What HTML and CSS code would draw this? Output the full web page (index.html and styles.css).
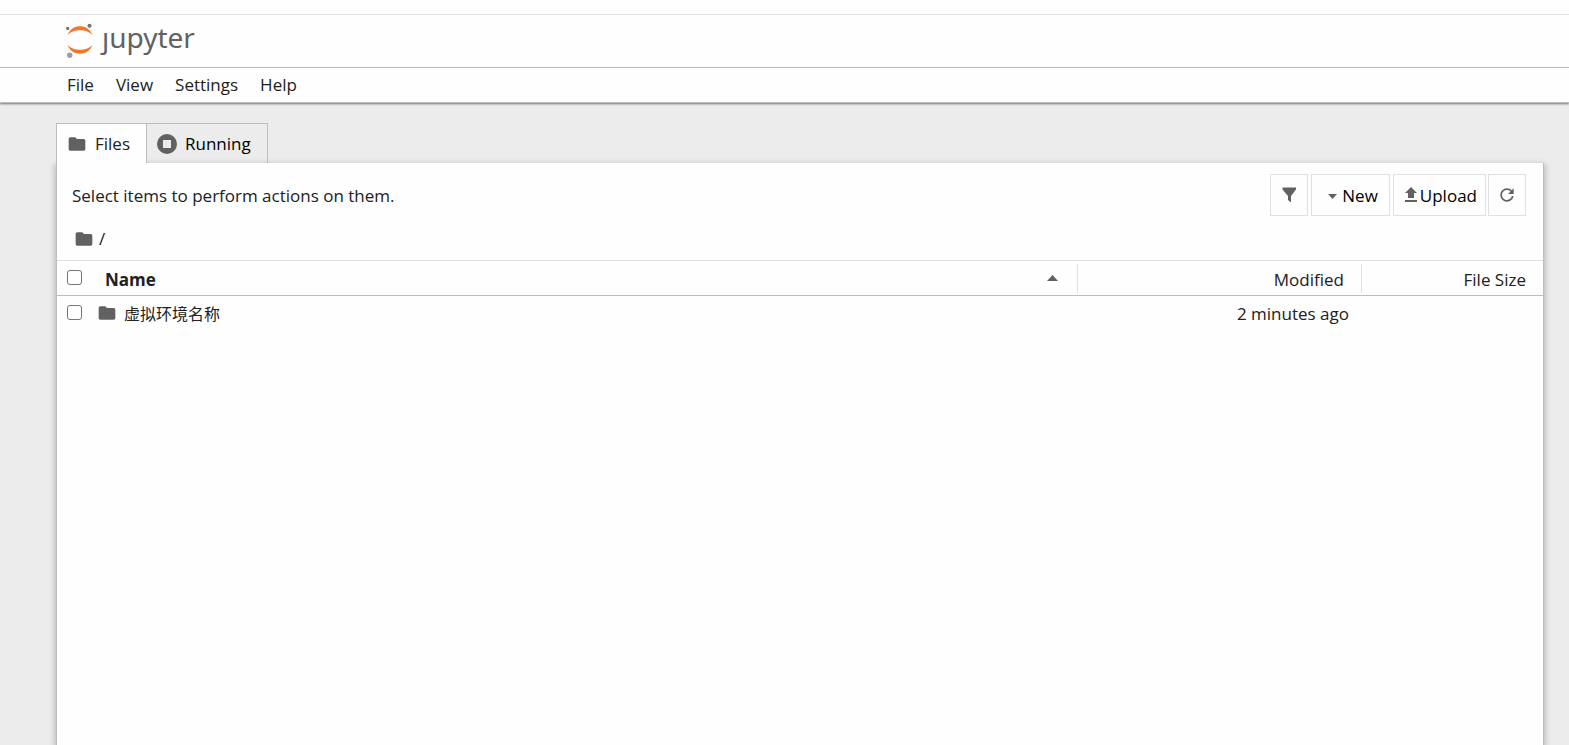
FILE: index.html
```html
<!DOCTYPE html>
<html lang="en">
<head>
<meta charset="utf-8">
<title>Home</title>
<link rel="stylesheet" href="styles.css">
</head>
<body>
<svg class="symbols" aria-hidden="true">
  <symbol id="folder" viewBox="0 0 24 24"><path d="M10 4H4c-1.1 0-1.99.9-1.99 2L2 18c0 1.100.9 2 2 2h16c1.100 0 2-.9 2-2V8c0-1.100-.9-2-2-2h-8l-2-2z"/></symbol>
</svg>
<header class="top">
  <a class="logo" href="#" aria-label="jupyter">
    <svg class="logo-mark" viewBox="0 0 30 36" aria-hidden="true">
      <path class="orange" d="M2.500 12C5 5.500 10 3.200 15 3.200S25 5.500 27.500 12C24 8.300 19.500 7.200 15 7.200S6 8.300 2.500 12zM2.500 22C5 28.500 10 30.700 15 30.700s10-2.200 12.500-8.700C24 25.700 19.500 26.700 15 26.700S6 25.700 2.500 22z"/>
      <circle cx="2.700" cy="5.500" r="1.700"/><circle cx="24.500" cy="2.800" r="2.100"/><circle class="light" cx="4.700" cy="32.300" r="2.700"/>
    </svg>
    <span class="logo-word">ȷupyter</span>
  </a>
</header>
<nav class="menu">
  <button>File</button><button>View</button><button>Settings</button><button>Help</button>
</nav>
<main class="main">
  <div class="tabs" role="tablist">
    <button class="tab active" role="tab" aria-selected="true"><svg class="icon"><use href="#folder"/></svg>Files</button>
    <button class="tab" role="tab" aria-selected="false"><svg class="icon stop" viewBox="0 0 20 20"><path fill-rule="evenodd" d="M10 0a10 10 0 1 0 0 20a10 10 0 1 0 0-20zM6 6h8v8h-8z"/></svg>Running</button>
  </div>
  <section class="panel">
    <div class="toolbar">
      <span class="hint">Select items to perform actions on them.</span>
      <button class="tool square" aria-label="Filter"><svg class="tool-icon" viewBox="0 0 16 16"><path d="M1.500 .5h13.500v2L10 9v6.500L7 13V9L1.500 2.500z"/></svg></button>
      <button class="tool new"><svg class="caret" viewBox="0 0 9 5"><path d="M0 0h9L4.500 5z"/></svg>New</button>
      <div class="pair">
        <button class="tool upload"><svg class="up" viewBox="0 0 14 16"><path d="M4 11V6H1L7 0l6 6h-3v5zM1 13h12v2H1z"/></svg>Upload</button>
        <button class="tool square refresh" aria-label="Refresh"><svg class="tool-icon" viewBox="0 0 18 18"><path d="M9 13.500c-2.490 0-4.500-2.010-4.500-4.500S6.510 4.500 9 4.500c1.240 0 2.360.52 3.170 1.330L10 8h5V3l-1.760 1.760C12.150 3.680 10.660 3 9 3 5.690 3 3.010 5.690 3.010 9S5.690 15 9 15c2.970 0 5.430-2.160 5.900-5h-1.520c-.46 2-2.240 3.500-4.380 3.500z"/></svg></button>
      </div>
    </div>
    <div class="crumbs"><a href="#" aria-label="Home"><svg class="icon"><use href="#folder"/></svg></a><span>/</span></div>
    <table class="files">
      <thead>
        <tr>
          <th class="c-name" scope="col"><div class="cell"><input type="checkbox" aria-label="Select all"><span class="head name-label">Name</span><svg class="sort" viewBox="0 0 11 6"><path d="M0 6h11L5.500 0z"/></svg></div></th>
          <th class="c-mod" scope="col"><div class="cell end"><span class="head">Modified</span></div></th>
          <th class="c-size" scope="col"><div class="cell end"><span class="head">File Size</span></div></th>
        </tr>
      </thead>
      <tbody>
        <tr>
          <td><div class="cell"><input type="checkbox" id="f1" aria-label="虚拟环境名称"><svg class="icon"><use href="#folder"/></svg><label class="file" for="f1">虚拟环境名称</label></div></td>
          <td class="when">2 minutes ago</td>
          <td></td>
        </tr>
      </tbody>
    </table>
  </section>
</main>
</body>
</html>
```
FILE: styles.css
```css
* { box-sizing: border-box; }
body {
  margin: 0;
  min-height: 100vh;
  display: flex;
  flex-direction: column;
  background: #ececec;
  color: #212121;
  font: 17px/24px "Open Sans", "Noto Sans CJK SC", sans-serif;
  overflow: hidden;
}
button { font: inherit; color: inherit; background: none; border: 0; padding: 0; }
svg { fill: #616161; flex: none; }
.symbols { position: absolute; width: 0; height: 0; }
.icon { width: 20px; height: 20px; display: block; }

.top {
  background: #fefefe;
  border-bottom: 1px solid #bdbdbd;
  padding-top: 14px;
}
.logo {
  display: flex;
  gap: 7px;
  height: 53px;
  padding: 8px 0 0 65px;
  border-top: 1px solid #e0e0e0;
  text-decoration: none;
}
.logo-mark { width: 30px; height: 36px; }
.logo-mark .orange { fill: #f37726; }
.logo-mark circle { fill: #767677; }
.logo-mark .light { fill: #9e9e9e; }
.logo-word { color: #616161; font: 28px/28px "Noto Sans", sans-serif; }

.menu {
  position: relative;
  display: flex;
  background: #fefefe;
  padding: 0 56px;
  height: 35px;
  border-bottom: 1px solid #bdbdbd;
  box-shadow: 0 1px 2px #757575;
}
.menu button { padding: 0 11px; }

.main {
  flex: 1;
  display: flex;
  flex-direction: column;
  padding: 20px 25px 0 56px;
}
.tabs { display: flex; position: relative; z-index: 1; }
.tab {
  display: flex;
  align-items: center;
  gap: 8px;
  height: 40px;
  padding: 1px 16px 0 10px;
  border: 1px solid #bdbdbd;
  border-width: 1px 1px 0 0;
  color: #000;
}
.tab.active { background: #fefefe; border-left-width: 1px; color: #212121; }

.panel {
  flex: 1;
  background: #fefefe;
  border: 1px solid #bdbdbd;
  border-width: 0 1px;
  box-shadow: 0 2px 6px 1px rgba(0, 0, 0, .24);
}
.toolbar { display: flex; align-items: center; gap: 3px; padding: 11px 17px 0 15px; }
.hint { flex: 1; padding-top: 2px; }
.pair { display: flex; gap: 2px; }
.tool {
  display: flex;
  align-items: center;
  justify-content: center;
  height: 42px;
  padding: 0 9px;
  border: 1px solid #e0e0e0;
  color: #000;
}
.square { width: 38px; padding: 0; }
.tool-icon { width: 16px; height: 16px; }
.refresh .tool-icon { width: 20px; height: 20px; }
.new { gap: 5px; padding: 2px 11px 0 16px; }
.caret { width: 9px; height: 5px; }
.upload { gap: 2px; padding: 2px 8px 0 10px; }
.up { width: 14px; height: 16px; margin-bottom: 2px; }
.crumbs { display: flex; align-items: center; gap: 5px; height: 44px; padding: 2px 17px 0; }

.files { width: 100%; border-collapse: collapse; table-layout: fixed; }
.files thead { border-top: 1px solid #e0e0e0; border-bottom: 1px solid #bdbdbd; }
.files th, .files td { padding: 0; height: 35px; font-weight: 400; text-align: left; }
.c-mod { width: 284px; }
.c-size { width: 182px; }
.cell { display: flex; align-items: center; height: 29px; padding-left: 10px; }
.end { justify-content: flex-end; padding-right: 17px; border-left: 1px solid #e0e0e0; }
.files input {
  appearance: none;
  width: 15px;
  height: 15px;
  margin: 0 15px 2px 0;
  border: 1px solid #767676;
  border-radius: 3px;
  background: #fff;
}
.head { padding-top: 3px; }
.name-label { flex: 1; padding-left: 8px; font-weight: 700; }
.sort { width: 11px; height: 6px; margin-right: 19px; }
.file { padding: 2px 0 0 7px; font-size: 16px; }
.files .when { padding: 2px 12px 0 0; text-align: right; }
```
